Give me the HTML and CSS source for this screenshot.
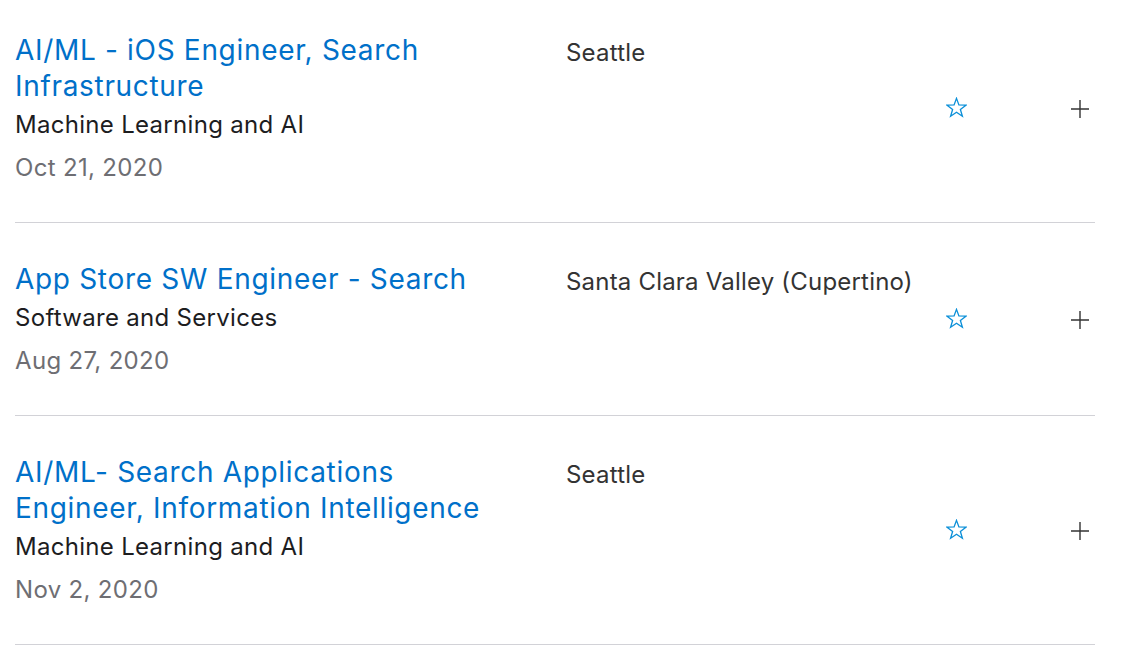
FILE: index.html
```html
<!DOCTYPE html>
<html lang="en">
<head>
<meta charset="utf-8">
<title>Jobs</title>
<link rel="stylesheet" href="styles.css">
</head>
<body>
<div class="list">
  <div class="row">
    <div class="info">
      <a class="title" href="#">AI/ML - iOS Engineer, Search Infrastructure</a>
      <div class="team">Machine Learning and AI</div>
      <div class="date">Oct 21, 2020</div>
    </div>
    <div class="loc">Seattle</div>
    <div class="fav"><svg viewBox="0 0 20 20" width="21" height="21"><path d="M10 1.3 L12.3 7.6 L19 7.8 L13.7 11.9 L15.6 18.3 L10 14.5 L4.4 18.3 L6.3 11.9 L1 7.8 L7.7 7.6 Z" fill="none" stroke="#0a8fd8" stroke-width="1.25" stroke-linejoin="miter"/></svg></div>
    <div class="more"><svg viewBox="0 0 18 18" width="18" height="18"><path d="M9 0 V18 M0 9 H18" stroke="#333" stroke-width="1.4"/></svg></div>
  </div>
  <div class="row">
    <div class="info">
      <a class="title" href="#">App Store SW Engineer - Search</a>
      <div class="team">Software and Services</div>
      <div class="date">Aug 27, 2020</div>
    </div>
    <div class="loc">Santa Clara Valley (Cupertino)</div>
    <div class="fav"><svg viewBox="0 0 20 20" width="21" height="21"><path d="M10 1.3 L12.3 7.6 L19 7.8 L13.7 11.9 L15.6 18.3 L10 14.5 L4.4 18.3 L6.3 11.9 L1 7.8 L7.7 7.6 Z" fill="none" stroke="#0a8fd8" stroke-width="1.25" stroke-linejoin="miter"/></svg></div>
    <div class="more"><svg viewBox="0 0 18 18" width="18" height="18"><path d="M9 0 V18 M0 9 H18" stroke="#333" stroke-width="1.4"/></svg></div>
  </div>
  <div class="row">
    <div class="info">
      <a class="title" href="#">AI/ML- Search Applications Engineer, Information Intelligence</a>
      <div class="team">Machine Learning and AI</div>
      <div class="date">Nov 2, 2020</div>
    </div>
    <div class="loc">Seattle</div>
    <div class="fav"><svg viewBox="0 0 20 20" width="21" height="21"><path d="M10 1.3 L12.3 7.6 L19 7.8 L13.7 11.9 L15.6 18.3 L10 14.5 L4.4 18.3 L6.3 11.9 L1 7.8 L7.7 7.6 Z" fill="none" stroke="#0a8fd8" stroke-width="1.25" stroke-linejoin="miter"/></svg></div>
    <div class="more"><svg viewBox="0 0 18 18" width="18" height="18"><path d="M9 0 V18 M0 9 H18" stroke="#333" stroke-width="1.4"/></svg></div>
  </div>
</div>
</body>
</html>
```
FILE: styles.css
```css
html, body {
  margin: 0;
  padding: 0;
  background: #fff;
}
body {
  font-family: Inter, "Noto Sans", sans-serif;
  -webkit-font-smoothing: antialiased;
  overflow: hidden;
}
.list {
  width: 1080px;
  margin: -6px 0 0 15px;
}
.row {
  display: flex;
  align-items: stretch;
  border-bottom: 1px solid #d2d2d7;
  padding: 38px 0 39px;
}
.info {
  width: 551px;
  display: flex;
  flex-direction: column;
}
.title {
  display: block;
  width: 510px;
  color: #0070c9;
  text-decoration: none;
  font-size: 28px;
  line-height: 36px;
  letter-spacing: 0.68px;
}
.team {
  margin-top: 6px;
  color: #1d1d1f;
  font-size: 24px;
  line-height: 30px;
  letter-spacing: 0.3px;
}
.date {
  margin-top: 13px;
  color: #6e6e73;
  font-size: 24px;
  line-height: 30px;
  letter-spacing: 0.32px;
}
.loc {
  width: 365px;
  padding-top: 3px;
  color: #333;
  font-size: 24px;
  line-height: 36px;
  letter-spacing: 0.2px;
}
.fav, .more {
  display: flex;
  align-items: center;
  justify-content: center;
}
.fav {
  width: 40px;
  margin-left: 5px;
}
.more {
  margin-left: 91px;
  width: 26px;
  padding-top: 3px;
}
```
